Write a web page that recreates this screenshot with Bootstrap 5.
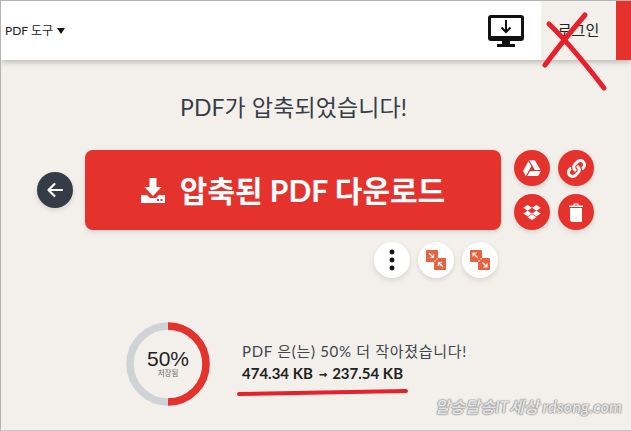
<!DOCTYPE html>
<html lang="ko">
<head>
    <meta charset="UTF-8">
    <title>PDF 압축</title>
    <link href="https://cdn.jsdelivr.net/npm/bootstrap@5.3.3/dist/css/bootstrap.min.css" rel="stylesheet">
    <style>
        html, body {
            height: 100%;
        }
        body {
            background: #f3f0ec;
            font-family: Lato, "Noto Sans CJK KR", sans-serif;
            color: #33383f;
            overflow: hidden;
        }
        .pagina {
            position: relative;
            width: 631px;
            height: 431px;
            border-top: 1px solid #b4b4b4;
            border-left: 1px solid #b4b4b4;
            border-bottom: 1px solid #c4c4c4;
            overflow: hidden;
        }
        .kepala {
            height: 59px;
            background: #fff;
            box-shadow: 0 2px 6px rgba(0,0,0,0.25);
        }
        .menu-alat {
            padding-left: 4px;
            font-size: 12px;
            color: #222;
        }
        .segitiga {
            display: inline-block;
            margin-left: 4px;
            border-left: 4.5px solid transparent;
            border-right: 4.5px solid transparent;
            border-top: 6px solid #111;
        }
        .ikon-monitor {
            margin-right: 17px;
            flex: none;
        }
        .tombol-masuk {
            width: 75px;
            height: 59px;
            flex: none;
            background: #f3f0ec;
            font-size: 15px;
            color: #222;
        }
        .pita-merah {
            width: 15px;
            height: 59px;
            flex: none;
            background: #e5322d;
        }
        .judul {
            width: 585px;
            margin-top: 33px;
            font-size: 23px;
            line-height: 28px;
            letter-spacing: .1px;
            color: #383e45;
            text-align: center;
        }
        .baris-aksi {
            margin-top: 29px;
            padding-left: 36px;
        }
        .bulat {
            width: 36px;
            height: 36px;
            border-radius: 50%;
            flex: none;
            box-shadow: 0 2px 5px rgba(0,0,0,0.12);
        }
        .bulat-gelap {
            background: #333c47;
            margin-right: 12px;
        }
        .bulat-merah {
            background: #e5322d;
        }
        .bulat-putih {
            background: #fff;
        }
        .tombol-unduh {
            width: 416px;
            height: 80px;
            background: #e5322d;
            border-radius: 8px;
            color: #fff;
            font-size: 30px;
            font-weight: 700;
            gap: 15px;
            box-shadow: 0 2px 5px rgba(0,0,0,0.12);
        }
        .kisi-bagi {
            display: grid;
            grid-template-columns: 36px 36px;
            gap: 8px;
            margin-left: 13px;
        }
        .baris-alat {
            margin-top: 12px;
            padding-left: 373px;
        }
        .hasil {
            margin-top: 44px;
            padding-left: 125px;
        }
        .cincin {
            position: relative;
            width: 84px;
            height: 84px;
            flex: none;
        }
        .cincin-teks {
            position: absolute;
            inset: 0;
            text-align: center;
            padding-top: 27px;
        }
        .persen {
            font-family: "Liberation Sans", sans-serif;
            font-size: 21px;
            line-height: 20px;
            color: #222;
        }
        .tersimpan {
            font-size: 7.5px;
            line-height: 10px;
            color: #666;
        }
        .hasil-teks {
            margin-left: 32px;
            padding-top: 18px;
            font-size: 15px;
            line-height: 22px;
            color: #40464d;
        }
        .hasil-kalimat {
            letter-spacing: .7px;
        }
        .hasil-ukuran {
            font-weight: 700;
            color: #222;
        }
        .panah-kecil {
            font-size: 10px;
            vertical-align: 1px;
            margin: 0 2px;
        }
        .coretan {
            position: absolute;
            left: 0;
            top: 0;
            pointer-events: none;
        }
        .tanda-air {
            position: absolute;
            right: 9px;
            bottom: 10px;
            font-size: 16.4px;
            font-weight: 700;
            font-style: italic;
            color: #e2e2e2;
            text-shadow: 0 0 1px #8a8a8a, 0 0 1px #8a8a8a, 0 0 2px #9a9a9a;
        }
    </style>
</head>
<body>
<div class="pagina">
    <div class="kepala d-flex align-items-center">
        <div class="menu-alat flex-grow-1 d-flex align-items-center">PDF 도구<span class="segitiga"></span></div>
        <svg class="ikon-monitor" width="36" height="32" viewBox="0 0 36 32">
            <path fill="#111" d="M3 0h30a3 3 0 0 1 3 3v20a3 3 0 0 1-3 3H22v3h5v3H9v-3h5v-3H3a3 3 0 0 1-3-3V3a3 3 0 0 1 3-3z"/>
            <rect x="3" y="3" width="30" height="18" fill="#fff"/>
            <path fill="none" stroke="#111" stroke-width="2" d="M18 5v12M13.500 12.500l4.500 4.500 4.500-4.500"/>
        </svg>
        <div class="tombol-masuk d-flex align-items-center justify-content-center">로그인</div>
        <div class="pita-merah"></div>
    </div>

    <div class="judul">PDF가 압축되었습니다!</div>

    <div class="baris-aksi d-flex align-items-center">
        <div class="bulat bulat-gelap d-flex align-items-center justify-content-center">
            <svg width="18" height="18" viewBox="0 0 18 18"><path fill="none" stroke="#fff" stroke-width="2.200" stroke-linecap="round" stroke-linejoin="round" d="M16 9H3M8.500 3L2.500 9l6 6"/></svg>
        </div>
        <div class="tombol-unduh d-flex align-items-center justify-content-center">
            <svg width="24" height="25" viewBox="0 0 24 25">
                <path fill="#fff" d="M8.500 0h7v9h5L12 18 3.500 9h5z"/>
                <path fill="#fff" d="M0 17h6l3 3h6l3-3h6v8H0z"/>
                <rect x="16" y="21" width="2" height="2" fill="#e5322d"/>
                <rect x="19.500" y="21" width="2" height="2" fill="#e5322d"/>
            </svg>
            <span>압축된 PDF 다운로드</span>
        </div>
        <div class="kisi-bagi">
            <div class="bulat bulat-merah d-flex align-items-center justify-content-center">
                <svg width="18" height="18" viewBox="0 0 512 512"><path fill="#fff" d="M339 314.900L175.400 32h161.200l163.600 282.900H339zm-137.500 23.600L120.900 480h310.500L512 338.500H201.500zM154.100 67.400L0 338.500 80.600 480 237 208.800 154.100 67.400z"/></svg>
            </div>
            <div class="bulat bulat-merah d-flex align-items-center justify-content-center">
                <svg width="19" height="19" viewBox="0 0 512 512"><path fill="#fff" d="M326.612 185.391c59.747 59.809 58.927 155.698.36 214.59-.11.12-.24.25-.36.37l-67.2 67.2c-59.27 59.27-155.699 59.262-214.96 0-59.27-59.26-59.27-155.7 0-214.96l37.106-37.106c9.84-9.84 26.786-3.3 27.294 10.606.648 17.722 3.826 35.527 9.69 52.721 1.986 5.822.567 12.262-3.783 16.612l-13.087 13.087c-28.026 28.026-28.905 73.66-1.155 101.96 28.024 28.579 74.086 28.749 102.325.51l67.2-67.19c28.191-28.191 28.073-73.757 0-101.83-3.701-3.694-7.429-6.564-10.341-8.569a16.037 16.037 0 0 1-6.947-12.606c-.396-10.567 3.348-21.456 11.698-29.806l21.054-21.055c5.521-5.521 14.182-6.199 20.584-1.731a152.482 152.482 0 0 1 20.522 17.197zM467.547 44.449c-59.261-59.262-155.69-59.27-214.96 0l-67.2 67.2c-.12.12-.25.25-.36.37-58.566 58.892-59.387 154.781.36 214.59a152.454 152.454 0 0 0 20.521 17.196c6.402 4.468 15.064 3.789 20.584-1.731l21.054-21.055c8.35-8.35 12.094-19.239 11.698-29.806a16.037 16.037 0 0 0-6.947-12.606c-2.912-2.005-6.64-4.875-10.341-8.569-28.073-28.073-28.191-73.639 0-101.83l67.2-67.19c28.239-28.239 74.3-28.069 102.325.51 27.75 28.3 26.872 73.934-1.155 101.96l-13.087 13.087c-4.35 4.35-5.769 10.79-3.783 16.612 5.864 17.194 9.042 35 9.69 52.721.509 13.906 17.454 20.446 27.294 10.606l37.106-37.106c59.271-59.259 59.271-155.699.001-214.959z"/></svg>
            </div>
            <div class="bulat bulat-merah d-flex align-items-center justify-content-center">
                <svg width="18" height="17" viewBox="0 0 528 512"><path fill="#fff" d="M264.400 116.300l-132 84.300 132 84.300-132 84.300L0 284.100l132.300-84.300L0 116.300 132.300 32l132.100 84.300zM131.600 395.700l132-84.300 132 84.300-132 84.300-132-84.300zm132.800-111.600l132-84.300-132-83.600L395.700 32 528 116.300l-132.300 84.300L528 284.800l-132.300 84.300-131.300-85z"/></svg>
            </div>
            <div class="bulat bulat-merah d-flex align-items-center justify-content-center">
                <svg width="14" height="19" viewBox="0 0 14 19"><path fill="#fff" d="M1 5h12v14H2.500L1 17.500zM0 2.500h4.500V0.500h5v2H14V4H0zM5.500 1.500v1h3v-1z"/></svg>
            </div>
        </div>
    </div>

    <div class="baris-alat d-flex gap-2">
        <div class="bulat bulat-putih d-flex align-items-center justify-content-center">
            <svg width="6" height="22" viewBox="0 0 6 22"><circle cx="3" cy="3" r="2.400" fill="#111"/><circle cx="3" cy="11" r="2.400" fill="#111"/><circle cx="3" cy="19" r="2.400" fill="#111"/></svg>
        </div>
        <div class="bulat bulat-putih d-flex align-items-center justify-content-center">
            <svg width="20" height="20" viewBox="0 0 20 20">
                <rect x="0" y="0" width="12" height="12" rx="1" fill="#e8623f"/>
                <rect x="8" y="8" width="12" height="12" rx="1" fill="#e8623f"/>
                <path fill="none" stroke="#fff" stroke-width="1.200" d="M3 3l4.500 4.500M7.500 4v3.500H4M17 17l-4.500-4.500M12.500 16v-3.500H16"/>
                <path fill="none" stroke="#fff" stroke-width="1.200" stroke-dasharray="1.500 1.500" d="M8.500 11.500l3-3"/>
            </svg>
        </div>
        <div class="bulat bulat-putih d-flex align-items-center justify-content-center">
            <svg width="20" height="20" viewBox="0 0 20 20">
                <rect x="0" y="0" width="12" height="12" rx="1" fill="#e8623f"/>
                <rect x="8" y="8" width="12" height="12" rx="1" fill="#e8623f"/>
                <path fill="none" stroke="#fff" stroke-width="1.200" d="M7.500 7.500L3 3M3 6.500V3h3.500M12.500 12.500L17 17M17 13.500V17h-3.500"/>
                <path fill="none" stroke="#fff" stroke-width="1.200" stroke-dasharray="1.500 1.500" d="M8.500 11.500l3-3"/>
            </svg>
        </div>
    </div>

    <div class="hasil d-flex">
        <div class="cincin">
            <svg width="84" height="84" viewBox="0 0 84 84">
                <circle cx="42" cy="42" r="38" fill="none" stroke="#d0d3d6" stroke-width="7.500"/>
                <path fill="none" stroke="#e5322d" stroke-width="7.500" d="M42 4a38 38 0 0 1 0 76"/>
            </svg>
            <div class="cincin-teks">
                <div class="persen">50%</div>
                <div class="tersimpan">저장됨</div>
            </div>
        </div>
        <div class="hasil-teks">
            <div class="hasil-kalimat">PDF 은(는) 50% 더 작아졌습니다!</div>
            <div class="hasil-ukuran">474.34 KB <span class="panah-kecil">➞</span> 237.54 KB</div>
        </div>
    </div>

    <svg class="coretan" width="631" height="431" viewBox="0 0 631 431">
        <path fill="none" stroke="#e8202c" stroke-width="5" stroke-linecap="round" d="M544 64C558 45 572 28 584 14"/>
        <path fill="none" stroke="#e8202c" stroke-width="5" stroke-linecap="round" d="M548 23C568 42 586 65 603 87"/>
        <path fill="none" stroke="#e8202c" stroke-width="4" stroke-linecap="round" d="M238 393C295 392 350 391 405 390"/>
    </svg>
    <div class="tanda-air">알송달송IT세상 rdsong.com</div>
</div>
<script src="https://cdn.jsdelivr.net/npm/bootstrap@5.3.3/dist/js/bootstrap.bundle.min.js"></script>
</body>
</html>
